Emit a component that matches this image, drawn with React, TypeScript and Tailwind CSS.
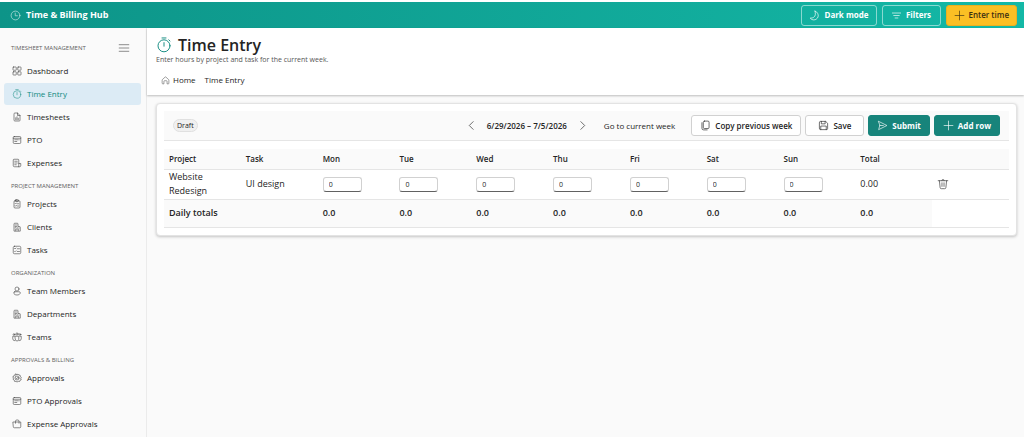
import { useState } from "react";
import type { ReactNode } from "react";
import { clsx } from "clsx";

const icons: Record<string, ReactNode> = {
  clock: (
    <>
      <circle cx="10" cy="10" r="8" />
      <path d="M9.5 5.5v5h4" />
    </>
  ),
  moon: <path d="M11 2a8.2 8.2 0 1 1-8.8 12.8C7.5 15 11 12.5 11.5 8.5c.3-2.3-.2-4.5-.5-6.5Z" />,
  filter: <path d="M2.5 5.5h15M5 10h10M7.5 14.5h5" />,
  plus: <path d="M10 2v16M2 10h16" />,
  menu: <path d="M2 4.5h16M2 10h16M2 15.5h16" />,
  grid: (
    <>
      <rect x="2" y="2" width="6.5" height="6.5" rx="1" />
      <rect x="11.5" y="2" width="6.5" height="6.5" rx="1" />
      <rect x="2" y="11.5" width="6.5" height="6.5" rx="1" />
      <rect x="11.5" y="11.5" width="6.5" height="6.5" rx="1" />
    </>
  ),
  timer: (
    <>
      <circle cx="10" cy="11" r="7.5" />
      <path d="M10 7v4.5M7.5 1.2h5M16 3.5 17.5 5" />
    </>
  ),
  sheet: (
    <>
      <path d="M4 3.5A1.5 1.5 0 0 1 5.500 2H11l5 5v9.500a1.500 1.500 0 0 1-1.500 1.500h-9A1.500 1.500 0 0 1 4 16.500ZM11 2v5h5" />
      <path d="M7.5 15.500v-4M10 15.500v-6M12.500 15.500v-3" />
    </>
  ),
  calendar: (
    <>
      <rect x="2.5" y="3" width="15" height="14" rx="2" />
      <path d="M2.500 6.500h15M5.500 9.500h6M5.500 13h4M13.500 9.500h1" />
    </>
  ),
  receipt: (
    <>
      <path d="M13.500 11V4A1.500 1.500 0 0 0 12 2.500H4A1.500 1.500 0 0 0 2.500 4v11A2.500 2.500 0 0 0 5 17.500h10a2.500 2.500 0 0 0 2.500-2.500v-4h-4v6.500" />
      <path d="M5.500 6.500h5M5.500 10h5M5.500 13.500h3" />
    </>
  ),
  clipboard: (
    <>
      <rect x="4" y="3.5" width="12" height="14.5" rx="2" />
      <rect x="7" y="1.5" width="6" height="3.5" rx="1" />
      <path d="m6.500 9 1 1 1.500-2M11 9.500h2.500M6.500 13.500l1 1 1.500-2M11 14h2.500" />
    </>
  ),
  building: (
    <>
      <path d="M4 17.500V4a1.500 1.500 0 0 1 1.500-1.500h5A1.500 1.500 0 0 1 12 4v5h3a1.500 1.500 0 0 1 1.500 1.500v7ZM7.500 17.500V14h5v3.500" />
      <path d="M6.500 6h.8M9 6h.8M6.500 9h.8M9 9h.8M6.500 11.500h.8M10 11.500h.8M13.500 12h.8" />
    </>
  ),
  tasks: (
    <>
      <rect x="2.5" y="2.5" width="15" height="15" rx="2.5" />
      <path d="m5 7 1 1 2-2M10.500 7.500H15M5 12.500l1 1 2-2M10.500 13H15" />
    </>
  ),
  person: (
    <>
      <circle cx="10" cy="6" r="4" />
      <path d="M5.500 11.500h9a2 2 0 0 1 2 2c0 3-3 4.500-6.500 4.500s-6.500-1.500-6.500-4.500a2 2 0 0 1 2-2Z" />
    </>
  ),
  team: (
    <>
      <circle cx="10" cy="4" r="2.2" />
      <circle cx="4" cy="5" r="1.7" />
      <circle cx="16" cy="5" r="1.7" />
      <path d="M6.500 8.500h7v6a3.500 3.500 0 0 1-7 0ZM4.500 8.500h-3v5a4 4 0 0 0 4 4M15.500 8.500h3v5a4 4 0 0 1-4 4" />
    </>
  ),
  approve: (
    <>
      <path d="m8 2 2 1.500L12 2l1.500 2.200 2.600 0 .4 2.600 2 1.700-1 2.500 1 2.500-2.500 1-.8 2.500-2.700-.3L10 18l-2-1.300-2.800.2-.7-2.600L2 12.500 3 10 1.500 7.500 4 6.300l.6-2.500 2.600.2Z" />
      <circle cx="10" cy="10" r="4" />
      <path d="m8 10 1.500 1.500 2.500-3" />
    </>
  ),
  bag: (
    <>
      <path d="M2.500 6h15v9.500a2 2 0 0 1-2 2h-11a2 2 0 0 1-2-2Z" />
      <path d="M7 8.500v-4A2.500 2.500 0 0 1 9.500 2h2A2.500 2.500 0 0 1 14 4.500v4" />
    </>
  ),
  home: (
    <path d="M2.500 9.500A2 2 0 0 1 3 8l6-5.500a1.500 1.500 0 0 1 2 0L17 8a2 2 0 0 1 .5 1.500V16a1.500 1.500 0 0 1-1.500 1.500h-2.500V12A1.500 1.500 0 0 0 12 10.500H8A1.500 1.500 0 0 0 6.500 12v5.500H4A1.500 1.500 0 0 1 2.500 16Z" />
  ),
  left: <path d="M13 3 6 10l7 7" />,
  right: <path d="m7 3 7 7-7 7" />,
  copy: (
    <>
      <rect x="6" y="2" width="10.5" height="13.5" rx="2" />
      <path d="M3.500 5v10a3 3 0 0 0 3 3H13" />
    </>
  ),
  save: (
    <>
      <path d="M2.500 4.500a2 2 0 0 1 2-2H14L17.500 6v9.500a2 2 0 0 1-2 2h-11a2 2 0 0 1-2-2Z" />
      <path d="M6 2.500V7h7V2.500M5 17.500V11h10v6.500" />
    </>
  ),
  send: <path d="M3 2.500 18 10 3 17.500 5 10ZM5 10h6.500" />,
  trash: (
    <>
      <path d="M2 4.500h16M8 4.500a2 2 0 0 1 4 0M4 4.500 5.200 16a2 2 0 0 0 2 1.800h5.600a2 2 0 0 0 2-1.800L16 4.500" />
      <path d="M8.300 8v6M11.700 8v6" />
    </>
  ),
};

function Icon({ name, className }: { name: string; className?: string }) {
  return (
    <svg
      viewBox="0 0 20 20"
      fill="none"
      stroke="currentColor"
      strokeWidth="1.2"
      strokeLinecap="round"
      strokeLinejoin="round"
      aria-hidden="true"
      className={clsx("shrink-0", className ?? "size-[11px]")}
    >
      {icons[name]}
    </svg>
  );
}

const navGroups = [
  {
    title: "Timesheet Management",
    items: [
      { label: "Dashboard", icon: "grid" },
      { label: "Time Entry", icon: "timer", active: true },
      { label: "Timesheets", icon: "sheet" },
      { label: "PTO", icon: "calendar" },
      { label: "Expenses", icon: "receipt" },
    ],
  },
  {
    title: "Project Management",
    items: [
      { label: "Projects", icon: "clipboard" },
      { label: "Clients", icon: "building" },
      { label: "Tasks", icon: "tasks" },
    ],
  },
  {
    title: "Organization",
    items: [
      { label: "Team Members", icon: "person" },
      { label: "Departments", icon: "building" },
      { label: "Teams", icon: "team" },
    ],
  },
  {
    title: "Approvals & Billing",
    items: [
      { label: "Approvals", icon: "approve" },
      { label: "PTO Approvals", icon: "calendar" },
      { label: "Expense Approvals", icon: "bag" },
    ],
  },
];

const days = ["Mon", "Tue", "Wed", "Thu", "Fri", "Sat", "Sun"];

function TopBar() {
  const button = "flex h-[21px] items-center justify-center gap-1 rounded-[3px] border px-[7px] text-[8px]";
  return (
    <header className="mt-[2px] flex h-[26px] items-center justify-between bg-linear-to-r from-[#0d9488] to-[#14b8a6] pr-[7px] pl-[10px] text-white">
      <div className="flex items-center gap-[5px] text-[9px] font-bold">
        <Icon name="clock" className="size-[11px] opacity-80" />
        Time &amp; Billing Hub
      </div>
      <div className="flex gap-[5px]">
        <button type="button" className={clsx(button, "border-white/50 font-bold")}>
          <Icon name="moon" />
          Dark mode
        </button>
        <button type="button" className={clsx(button, "min-w-[59px] border-white/50 font-bold")}>
          <Icon name="filter" />
          Filters
        </button>
        <button type="button" className={clsx(button, "border-[#eab020] bg-[#fbbf24] font-semibold text-[#3b2f12]")}>
          <Icon name="plus" />
          Enter time
        </button>
      </div>
    </header>
  );
}

function Sidebar() {
  return (
    <aside className="w-[147px] shrink-0 border-r border-[#ebebeb] bg-[#fafafa] px-1">
      <nav>
        {navGroups.map((group, i) => (
          <section key={group.title}>
            <div
              className={clsx(
                "flex items-center justify-between pr-3 pl-[7px] text-[#616161]",
                i === 0 ? "h-8 pt-2" : "h-[18px] pt-1",
              )}
            >
              <h2 className="text-[6px] uppercase">{group.title}</h2>
              {i === 0 && (
                <button type="button" aria-label="Collapse menu">
                  <Icon name="menu" className="size-3" />
                </button>
              )}
            </div>
            <ul>
              {group.items.map((item) => (
                <li key={item.label}>
                  <a
                    href="#"
                    className={clsx(
                      "mr-px mb-px flex h-[22px] items-center gap-[5px] rounded-[3px] pl-2 text-[8px]",
                      "active" in item ? "bg-[#dcebf5] text-[#0f8a80]" : "text-[#242424]",
                    )}
                  >
                    <Icon name={item.icon} className="size-[10px] opacity-85" />
                    {item.label}
                  </a>
                </li>
              ))}
            </ul>
          </section>
        ))}
      </nav>
    </aside>
  );
}

function PageHeader() {
  return (
    <div className="h-[67px] bg-white px-[9px] pt-[6px] shadow-[0_1px_2px_rgba(0,0,0,0.25)]">
      <h1 className="flex h-[21px] items-center gap-[6px] text-[16px] font-semibold text-[#242424]">
        <Icon name="timer" className="size-4 text-[#118a80]" />
        Time Entry
      </h1>
      <p className="text-[7px] leading-[10px] text-[#555555]">
        Enter hours by project and task for the current week.
      </p>
      <nav
        aria-label="Breadcrumb"
        className="mt-2 flex items-center gap-[9px] pl-[5px] text-[8px] leading-[14px] text-[#242424]"
      >
        <a href="#" className="flex items-center gap-[3px]">
          <Icon name="home" className="size-[9px] opacity-80" />
          Home
        </a>
        <span>Time Entry</span>
      </nav>
    </div>
  );
}

function Toolbar() {
  const button = "flex h-[21px] items-center gap-1 rounded-[3px] border text-[8px]";
  return (
    <div className="flex h-[30px] items-center justify-between border-b border-[#e5e5e5] bg-[#fafafa] px-[9px] text-[#242424]">
      <span className="rounded-full border border-[#e0e0e0] bg-[#f0f0f0] px-[3px] text-[7px] leading-[11px]">
        Draft
      </span>
      <div className="flex items-center gap-1">
        <button type="button" aria-label="Previous week">
          <Icon name="left" />
        </button>
        <span className="px-[6px] text-[8px] font-semibold">6/29/2026 – 7/5/2026</span>
        <button type="button" aria-label="Next week">
          <Icon name="right" />
        </button>
        <button type="button" className="px-3 text-[8px]">
          Go to current week
        </button>
        <button type="button" className={clsx(button, "border-[#d1d1d1] bg-white px-2 font-semibold")}>
          <Icon name="copy" />
          Copy previous week
        </button>
        <button type="button" className={clsx(button, "border-[#d1d1d1] bg-white px-3 font-semibold")}>
          <Icon name="save" />
          Save
        </button>
        <button type="button" className={clsx(button, "border-[#17847b] bg-[#17847b] px-2 font-bold text-white")}>
          <Icon name="send" />
          Submit
        </button>
        <button type="button" className={clsx(button, "border-[#17847b] bg-[#17847b] px-2 font-bold text-white")}>
          <Icon name="plus" />
          Add row
        </button>
      </div>
    </div>
  );
}

function HoursTable() {
  const [hours, setHours] = useState<string[]>(days.map(() => "0"));

  const total = hours.reduce((sum, value) => sum + (Number(value) || 0), 0);

  const updateHours = (index: number, value: string) => {
    setHours(hours.map((current, i) => (i === index ? value : current)));
  };

  return (
    <table className="mt-2 w-full table-fixed text-left text-[9px] text-[#242424] [&_td]:px-[5px] [&_th]:px-[5px]">
      <thead>
        <tr className="h-5 border-b border-[#e5e5e5] bg-[#fafafa] text-[8px] [&_th]:font-semibold">
          <th>Project</th>
          <th>Task</th>
          {days.map((day) => (
            <th key={day}>{day}</th>
          ))}
          <th>Total</th>
          <th aria-label="Actions" />
        </tr>
      </thead>
      <tbody>
        <tr className="h-[30px] border-b border-[#e5e5e5]">
          <td className="leading-[14px]">Website Redesign</td>
          <td>UI design</td>
          {days.map((day, i) => (
            <td key={day}>
              <input
                type="text"
                aria-label={`${day} hours`}
                value={hours[i]}
                onChange={(e) => updateHours(i, e.target.value)}
                className="block h-[15px] w-[39px] rounded-[3px] border border-[#d1d1d1] border-b-[#616161] bg-white px-[5px] text-[7px]"
              />
            </td>
          ))}
          <td>{total.toFixed(2)}</td>
          <td>
            <button type="button" aria-label="Delete row" className="block">
              <Icon name="trash" className="size-3 opacity-85" />
            </button>
          </td>
        </tr>
      </tbody>
      <tfoot>
        <tr className="h-7 border-b border-[#e5e5e5] font-semibold [&_td]:bg-[#fafafa]">
          <th className="bg-[#fafafa] font-semibold" colSpan={2}>
            Daily totals
          </th>
          {days.map((day, i) => (
            <td key={day}>{(Number(hours[i]) || 0).toFixed(1)}</td>
          ))}
          <td>{total.toFixed(1)}</td>
          <th aria-label="Actions" />
        </tr>
      </tfoot>
    </table>
  );
}

export default function App() {
  return (
    <div className="flex min-h-screen flex-col overflow-hidden bg-white font-['Open_Sans',sans-serif]">
      <TopBar />
      <div className="flex grow">
        <Sidebar />
        <main className="min-w-0 grow bg-[#fafafa]">
          <PageHeader />
          <section className="mt-2 mr-[7px] ml-[9px] rounded border border-[#e3e3e3] bg-white p-[7px] shadow-[0_1px_3px_rgba(0,0,0,0.22)]">
            <Toolbar />
            <HoursTable />
          </section>
        </main>
      </div>
    </div>
  );
}
